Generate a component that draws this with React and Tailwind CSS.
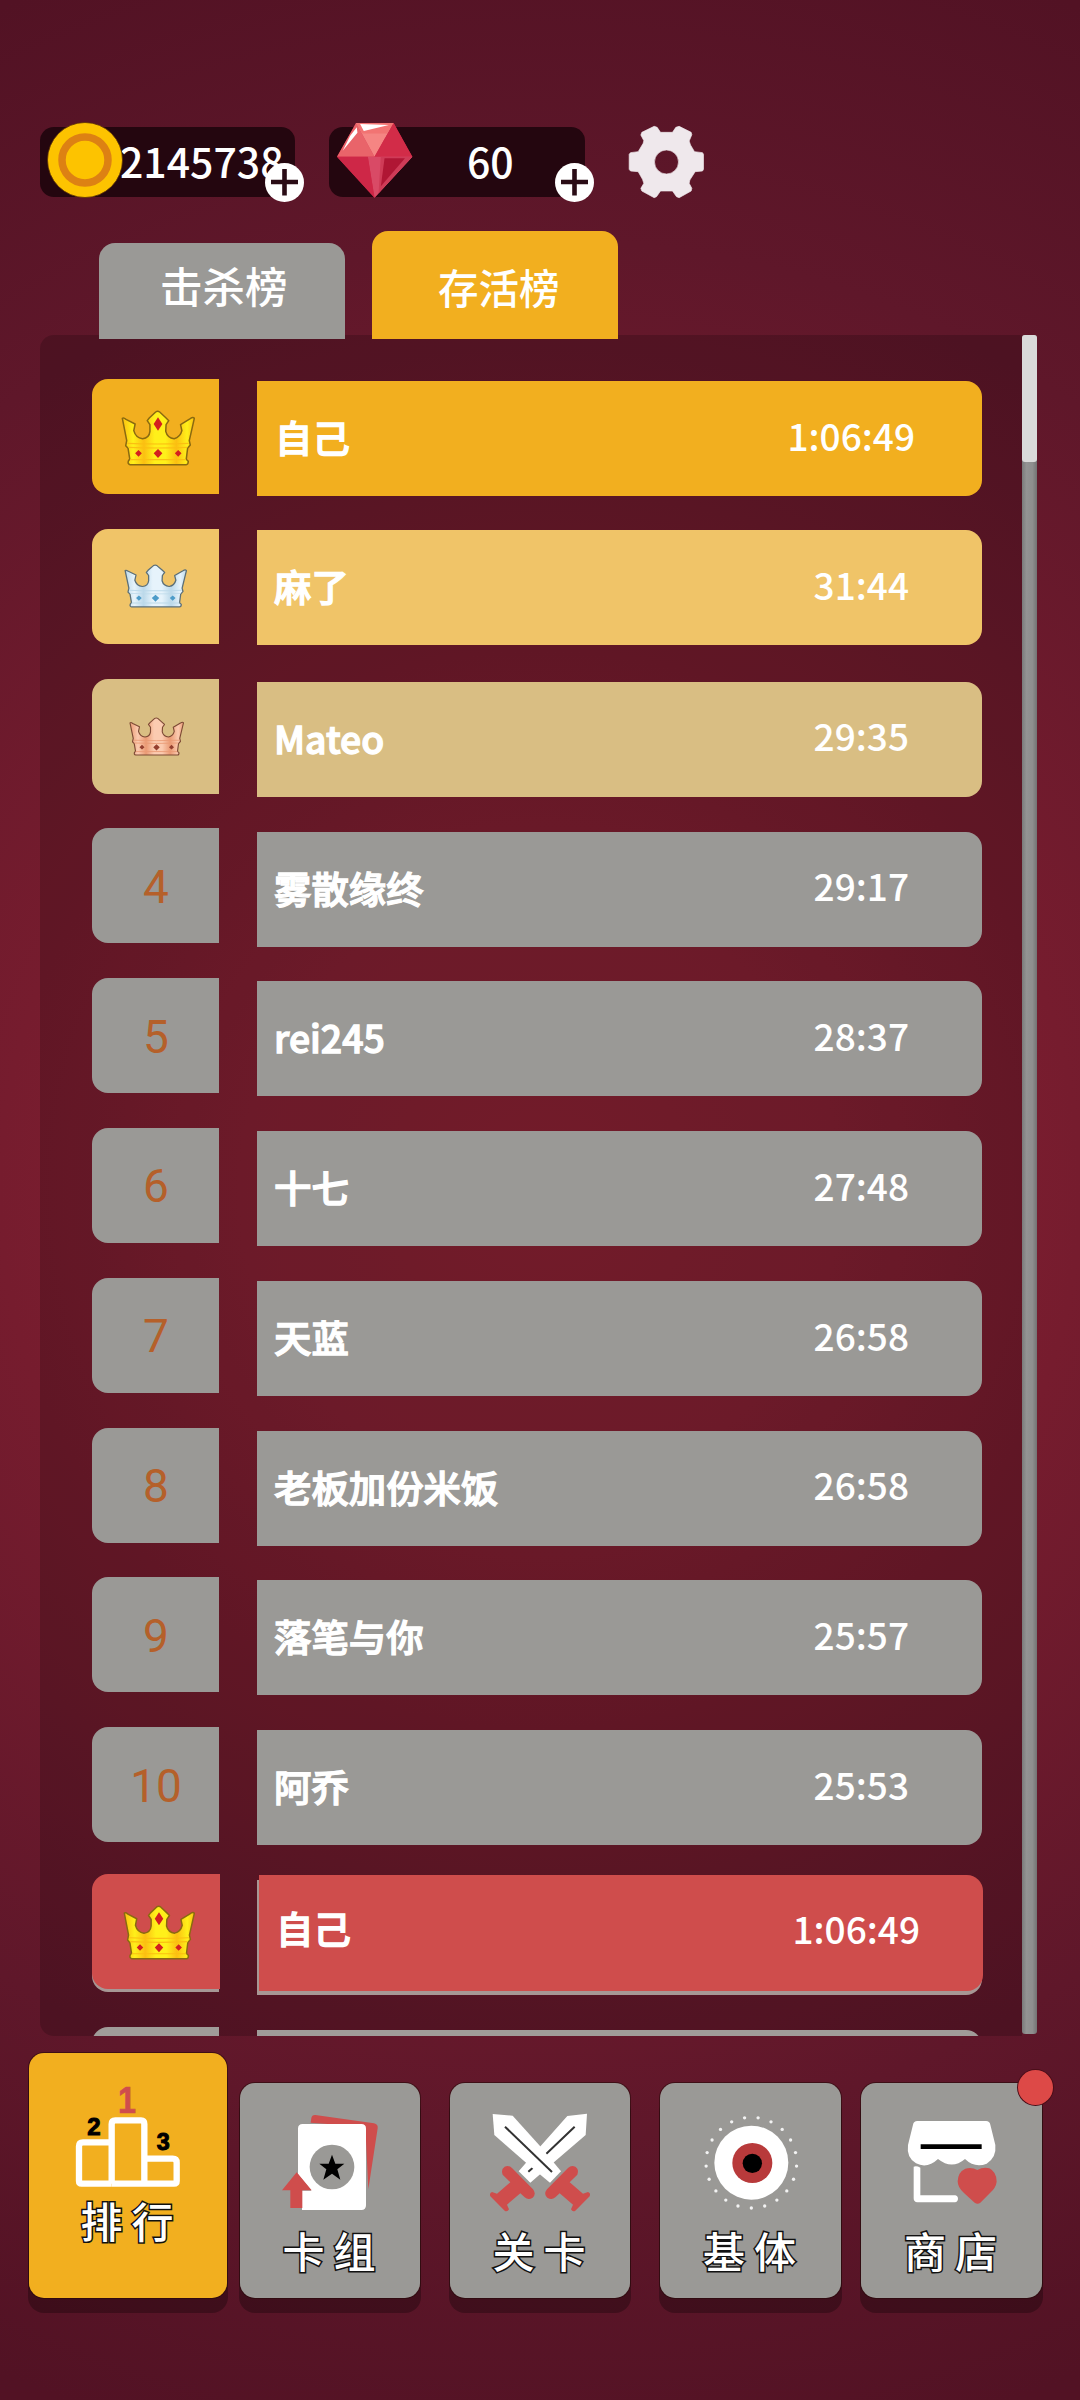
import React from 'react'
import clsx from 'clsx'

const rows = [
  { rank: 1, name: '自己', time: '1:06:49', color: 'bg-[#f2af1f]', offset: 'mt-[2px]', timePad: 'pr-[67px]', namePad: 'pl-[18px]' },
  { rank: 2, name: '麻了', time: '31:44', color: 'bg-[#f0c468]', offset: 'mt-px' },
  { rank: 3, name: 'Mateo', time: '29:35', color: 'bg-[#d9be83]' },
  { rank: 4, name: '雾散缘终', time: '29:17', offset: 'mt-[3.2px]' },
  { rank: 5, name: 'rei245', time: '28:37' },
  { rank: 6, name: '十七', time: '27:48' },
  { rank: 7, name: '天蓝', time: '26:58' },
  { rank: 8, name: '老板加份米饭', time: '26:58' },
  { rank: 9, name: '落笔与你', time: '25:57' },
  { rank: 10, name: '阿乔', time: '25:53' },
]

const crowns = {
  1: { id: 'gold', light: '#fff01a', dark: '#fbbf12', line: '#8a6a10', gem: '#d3201f' },
  2: { id: 'silver', light: '#e6f3fb', dark: '#bcd9ea', line: '#5b6f78', gem: '#4d9cc9' },
  3: { id: 'bronze', light: '#fbcbb0', dark: '#ea9a74', line: '#7d4a35', gem: '#94402f' },
}

function Crown({ kind, className }) {
  const c = crowns[kind]
  return (
    <svg viewBox="184 178 220 168" preserveAspectRatio="none" className={className}>
      <defs>
        <linearGradient id={c.id} x1="0" x2="1" y1="0" y2="0">
          <stop offset="0" stopColor={c.dark} />
          <stop offset="0.15" stopColor={c.light} />
          <stop offset="0.3" stopColor={c.dark} />
          <stop offset="0.45" stopColor={c.light} />
          <stop offset="0.6" stopColor={c.light} />
          <stop offset="0.75" stopColor={c.dark} />
          <stop offset="0.9" stopColor={c.light} />
          <stop offset="1" stopColor={c.dark} />
        </linearGradient>
      </defs>
      <path
        d="M188 203 Q192 200 199 206 L226 220 L222 240 Q228 262 248 264 Q268 262 270 242 L270 222 L262 210 L268 202 L287 184 Q293 180 299 184 L318 202 L326 210 L318 222 L317 242 Q322 262 342 264 Q360 260 365 240 L361 222 L390 204 Q398 198 402 203 L387 270 L390 283 L382 293 L378 326 L384 332 Q384 342 378 342 L211 342 Q203 340 206 331 L210 325 L205 293 L198 285 L201 270 Z"
        fill={`url(#${c.id})`}
        stroke={c.line}
        strokeWidth="4.5"
        strokeLinejoin="round"
      />
      <path d="M203 278 Q294 282 385 278 M206 290 Q294 294 381 290 M211 327 H377" fill="none" stroke={c.dark} strokeWidth="3.5" />
      {kind === 1 && <path d="M294 200 L307 220 L294 240 L281 220Z" fill={c.gem} />}
      <path d="M294 295 L307 308 L294 322 L281 308Z M236 298 L246 308 L236 318 L226 308Z M354 298 L364 308 L354 318 L344 308Z" fill={c.gem} />
    </svg>
  )
}

function Plus() {
  return (
    <svg viewBox="0 0 39 39" className="absolute -right-[9px] top-[36px] h-[39px] w-[39px]">
      <circle cx="19.5" cy="19.5" r="19.5" fill="#fff" />
      <path d="M6 19H33 M19.5 6V32.5" stroke="#2a0c16" strokeWidth="4.6" />
    </svg>
  )
}

function Gem() {
  return (
    <svg viewBox="50 64 230 230" className="absolute left-[7px] top-[-5px] h-[77px] w-[77px]">
      <path d="M110 67H222L278 168L165 290L53 168Z" fill="#d32a49" />
      <path d="M110 67L165 168H53Z" fill="#e9646a" />
      <path d="M110 67H222L165 168Z" fill="#f58583" />
      <path d="M110 67H222L203 98L128 98Z" fill="#f27473" />
      <path d="M222 67L278 168H165Z" fill="#d22c48" />
      <path d="M145 168H278L165 290Z" fill="#d94a66" />
      <path d="M53 168H145L165 290Z" fill="#ce2747" />
      <path d="M184 168H278L177 277Z" fill="#cf3b57" />
      <path d="M195 172H256L184 256Z" fill="#b01634" />
      <path d="M122 70L208 73L133 91Z M112 80L114 96L70 150L92 106Z" fill="#fff" />
    </svg>
  )
}

function Gear() {
  return (
    <svg viewBox="925 75 230 222" className="ml-[43px] mt-[-2px] h-[74px] w-[77px]">
      <path
        fillRule="evenodd"
        fill="#efe8ec"
        stroke="#efe8ec"
        strokeWidth="2"
        strokeLinejoin="round"
        d="M966 97L1003 79L1012 82L1022 97H1058L1068 82L1078 79L1114 97L1116 104L1108 123L1112 135L1124 155L1148 158L1151 163V208L1148 213L1126 215L1110 240L1108 250L1116 265L1114 273L1078 293L1070 290L1058 273H1022L1010 290L1003 293L966 273L963 265L972 250L968 238L955 215L932 213L928 208V163L932 158L955 155L970 130L972 122L963 105Z M1040 150A36 36 0 1 0 1040 222A36 36 0 1 0 1040 150Z"
      />
    </svg>
  )
}

function Podium() {
  return (
    <svg viewBox="235 189 300 300" className="h-[100px] w-[100px] overflow-visible">
      <g fill="none" stroke="#fff" strokeWidth="19" strokeLinejoin="round">
        <path d="M336 491H246Q238 491 238 483V379Q238 367 250 367H336" />
        <path d="M336 491V312Q336 301 347 301H424Q434 301 434 312V491" />
        <path d="M434 416H519Q531 416 531 428V483Q531 491 523 491H336" />
      </g>
      <g fontFamily="'Liberation Sans', Arial, sans-serif" fontWeight="700" textAnchor="middle">
        <text x="382" y="279" fontSize="112" fill="#cf4d4c" stroke="#cf4d4c" strokeWidth="2" textLength="54" lengthAdjust="spacingAndGlyphs">1</text>
        <text x="283" y="345" fontSize="72" fill="#000" stroke="#000" strokeWidth="3">2</text>
        <text x="491" y="391" fontSize="70" fill="#000" stroke="#000" strokeWidth="3">3</text>
      </g>
    </svg>
  )
}

function Cards() {
  return (
    <svg viewBox="840 279 300 300" className="h-[100px] w-[100px] overflow-visible">
      <path d="M934 294Q936 284 946 285L1122 310Q1135 313 1133 325L1105 508L1096 320L932 308Z" fill="#cf4d4c" />
      <path d="M908 312H1084Q1098 312 1098 326V556Q1098 570 1084 570H906V512H934L894 462V326Q894 312 908 312Z" fill="#fff" />
      <circle cx="996" cy="441" r="67" fill="#9a9996" />
      <path d="M996 404L1006 431H1033L1012 448L1021 479L996 461L970 479L979 448L958 431H986Z" fill="#000" />
      <path d="M890 457L935 511H907V564H871V511H846Z" fill="#cf4d4c" />
    </svg>
  )
}

function Swords() {
  return (
    <svg viewBox="180 189 300 300" className="h-[100px] w-[100px] overflow-visible">
      <path d="M471 191L467 255L363 344L301 398L266 364L330 290L412 198Z" fill="#fff" />
      <path d="M346 314L434 230M295 365L312 350" stroke="#333" strokeWidth="6" />
      <path d="M188 192L248 197L330 288L393 364L360 398L295 344L193 255Z" fill="#fff" />
      <path d="M225 230L366 366" stroke="#333" strokeWidth="6" />
      <g id="hilt" fill="#cf4d4c">
        <path d="M218 374Q212 358 224 350Q236 344 246 354L309 418Q320 432 308 443Q295 451 284 442L271 430L231 464L237 478Q232 487 224 482L181 439Q177 429 186 426L201 431L241 397Z" />
      </g>
      <use href="#hilt" transform="translate(660 0) scale(-1 1)" />
    </svg>
  )
}

function Eye() {
  const dots = Array.from({ length: 21 }, (_, i) => {
    const a = (i / 21) * Math.PI * 2 + Math.PI / 2
    return { x: 332 + Math.cos(a) * 136, y: 338 + Math.sin(a) * 136 }
  })
  return (
    <svg viewBox="181 189 300 300" className="h-[100px] w-[100px] overflow-visible">
      {dots.map((d, i) => (
        <circle key={i} cx={d.x} cy={d.y} r="5" fill="#f3f3f3" />
      ))}
      <circle cx="332" cy="338" r="111" fill="#fff" />
      <circle cx="335" cy="339" r="60" fill="#b83a3b" />
      <circle cx="335" cy="340" r="29" fill="#000" />
    </svg>
  )
}

function Shop() {
  return (
    <svg viewBox="184 219 300 300" className="h-[100px] w-[100px] overflow-visible">
      <path d="M230 243H436Q447 243 449 254L464 315Q468 352 438 371Q402 385 373 357Q334 390 292 357Q260 387 226 370Q197 353 202 315L217 254Q219 243 230 243Z" fill="#fff" />
      <path d="M240 320H423" stroke="#000" strokeWidth="14" />
      <path d="M219 380Q228 377 239 383V466H344Q352 468 352 477Q351 486 343 487H230Q219 486 219 475Z" fill="#fff" />
      <path d="M410 390Q428 380 446 385Q468 396 468 425Q466 443 448 459L419 488Q411 494 402 488L370 459Q351 443 351 424Q352 396 374 386Q394 381 410 390Z" fill="#cf4d4c" />
    </svg>
  )
}

const tabs = [
  { label: '排行', icon: Podium, box: 'h-[245px] w-[198px] bg-[#f2af1f]' },
  { label: '卡组', icon: Cards, box: 'ml-[13px] h-[215px] w-[180px] bg-[#9a9996]' },
  { label: '关卡', icon: Swords, box: 'ml-[30px] h-[215px] w-[180px] bg-[#9a9996]' },
  { label: '基体', icon: Eye, box: 'ml-[30px] h-[215px] w-[181px] bg-[#9a9996]' },
  { label: '商店', icon: Shop, box: 'ml-[20px] h-[215px] w-[181px] bg-[#9a9996]', badge: true },
]

function NavButton({ tab }) {
  const Icon = tab.icon
  return (
    <button
      className={clsx(
        'relative flex flex-col items-center rounded-[15px] pt-[30px] shadow-[0_0_0_1px_rgba(40,10,10,0.6),0_14px_0_1px_rgba(0,0,0,0.28)]',
        tab.box
      )}
    >
      <Icon />
      <span className="mt-[7px] pl-[7px] text-[42px] font-medium leading-[60px] tracking-[9px] text-white [-webkit-text-stroke:3px_#111] [paint-order:stroke_fill]">
        {tab.label}
      </span>
      {tab.badge && (
        <span className="absolute -right-[11px] -top-[13px] h-[35px] w-[35px] rounded-full bg-[#dd4947] shadow-[0_0_0_1px_#4a0d18]" />
      )}
    </button>
  )
}

function Row({ row }) {
  const color = row.color || 'bg-[#9a9996]'
  return (
    <div className="flex h-[149.8px] items-start">
      <div className={clsx('flex h-[115px] w-[127px] items-center justify-center rounded-l-[16px]', color)}>
        {row.rank === 1 && <Crown kind={1} className="ml-[5px] mt-[3px] h-[56px] w-[74px]" />}
        {row.rank === 2 && <Crown kind={2} className="h-[44px] w-[63px]" />}
        {row.rank === 3 && <Crown kind={3} className="ml-[2px] h-[39px] w-[55px]" />}
        {row.rank > 3 && (
          <span className="pl-px pt-[2px] font-[Roboto,sans-serif] text-[46px] leading-none text-[#b5602a]">{row.rank}</span>
        )}
      </div>
      <div className={clsx('ml-[38px] flex h-[115px] w-[725px] items-center justify-between rounded-r-[16px] text-white', color, row.offset || 'mt-[3px]', row.namePad || 'pl-[17px]', row.timePad || 'pr-[73px]')}>
        <span className="pb-[3px] text-[37.4px] font-medium [-webkit-text-stroke:1.3px_#fff]">{row.name}</span>
        <span className="pb-[6px] text-[37px] font-medium">{row.time}</span>
      </div>
    </div>
  )
}

function SelfRow() {
  return (
    <div className="relative flex h-[149.8px] items-start">
      <div className="h-[115px] w-[127px] rounded-l-[16px] bg-[#a79795]" />
      <div className="ml-[38px] mt-[3px] h-[115px] w-[725px] rounded-r-[16px] bg-[#a79795]" />
      <div className="absolute left-0 top-[-3px] flex items-start">
        <div className="flex h-[115px] w-[128px] items-center justify-center rounded-l-[16px] bg-[#cf4d4c]">
          <Crown kind={1} className="ml-[5px] mt-[2px] h-[55px] w-[72px]" />
        </div>
        <div className="ml-[39px] mt-px flex h-[116px] w-[724px] items-center justify-between rounded-r-[16px] bg-[#cf4d4c] pl-[17px] pr-[63px] text-white">
          <span className="pb-[10px] text-[37.4px] font-medium [-webkit-text-stroke:1.3px_#fff]">自己</span>
          <span className="pb-[8px] text-[37px] font-medium">1:06:49</span>
        </div>
      </div>
    </div>
  )
}

export default function App() {
  return (
    <div
      lang="zh-CN"
      className="flex h-[2400px] w-[1080px] flex-col overflow-hidden bg-[radial-gradient(circle_at_540px_1190px,#8c2234_0px,#842032_300px,#761c2e_540px,#5f172a_950px,#521224_1300px)] pt-[127px] font-['Noto_Sans_CJK_SC',sans-serif]"
    >
      <header className="flex h-[70px] shrink-0 items-start pl-[40px]">
        <div className="relative h-[70px] w-[255px] rounded-[14px] bg-[#24060f]">
          <span className="block pl-[80px] text-[41px] font-medium leading-[66px] text-white">2145738</span>
          <svg viewBox="0 0 76 76" className="absolute left-[7px] top-[-5px] h-[76px] w-[76px]">
            <circle cx="38" cy="38" r="37.5" fill="#fdc300" stroke="#5b3005" strokeWidth="0.8" />
            <circle cx="38" cy="38" r="23" fill="none" stroke="#dd8113" strokeWidth="7.5" />
          </svg>
          <Plus />
        </div>
        <div className="relative ml-[34px] h-[70px] w-[256px] rounded-[14px] bg-[#24060f]">
          <span className="block pl-[138px] text-[41px] font-medium leading-[66px] text-white">60</span>
          <Gem />
          <Plus />
        </div>
        <Gear />
      </header>

      <div className="z-10 mt-[34px] flex h-[108px] shrink-0 items-end pl-[99px] font-medium text-white">
        <div className="h-[96px] w-[246px] rounded-t-[16px] bg-[#9a9996] pl-[61px] text-[42.5px] leading-[84px]">击杀榜</div>
        <div className="ml-[27px] h-[108px] w-[246px] rounded-t-[16px] bg-[#f2af1f] pl-[66px] text-[40.5px] leading-[111px]">存活榜</div>
      </div>

      <main className="mt-[-4px] flex h-[1701px] shrink-0 pl-[40px]">
        <section className="h-full w-[982px] overflow-hidden rounded-l-[14px] bg-black/18 pl-[52px] pt-[44px]">
          {rows.map((row) => (
            <Row key={row.rank} row={row} />
          ))}
          <SelfRow />
          <div className="flex items-start">
            <div className="h-[115px] w-[127px] rounded-l-[16px] bg-[#a09c99]" />
            <div className="ml-[38px] mt-[3px] h-[115px] w-[725px] rounded-r-[16px] bg-[#a09c99]" />
          </div>
        </section>
        <div className="h-[1699px] w-[15px] rounded-[3px] bg-[linear-gradient(90deg,#7a7a7a,#939393_30%,#8e8e8e_70%,#737373)]">
          <div className="h-[127px] rounded-[3px] bg-[#dadada]" />
        </div>
      </main>

      <nav className="mt-[17px] flex h-[245px] shrink-0 items-end pl-[29px]">
        {tabs.map((tab) => (
          <NavButton key={tab.label} tab={tab} />
        ))}
      </nav>
    </div>
  )
}
